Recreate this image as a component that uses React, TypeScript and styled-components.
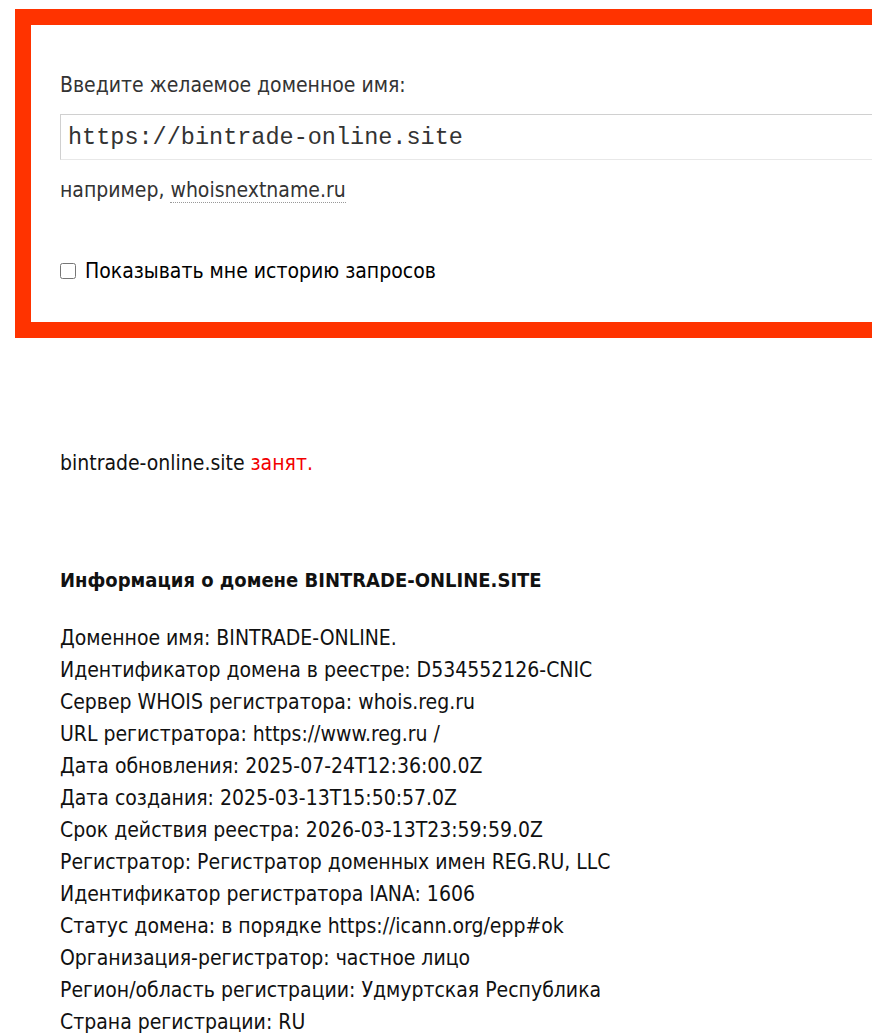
import React from "react";
import styled, { createGlobalStyle } from "styled-components";

const Global = createGlobalStyle`
  html, body { margin: 0; padding: 0; background: #fff; overflow-x: hidden; }
  body { font-family: "DejaVu Sans Condensed", "DejaVu Sans", Tahoma, sans-serif; color: #111; }
`;

const Page = styled.div`
  padding: 9px 0 0 15px;
`;

const SearchBox = styled.form`
  width: 900px;
  border: 16px solid #ff3300;
  box-sizing: border-box;
  padding: 48px 0 39px 29px;
  display: flex;
  flex-direction: column;
`;

const Label = styled.label`
  font-size: 21px;
  color: #333;
  line-height: 24px;
`;

const DomainInput = styled.input`
  margin-top: 17px;
  height: 46px;
  box-sizing: border-box;
  width: 900px;
  border: 1px solid #d0d0d0;
  border-bottom-color: #e8e8e8;
  padding: 0 7px;
  font-family: "Liberation Mono", "Courier New", monospace;
  font-size: 23.5px;
  color: #333;
  outline: none;
`;

const Hint = styled.div`
  margin-top: 18px;
  font-size: 21px;
  line-height: 24px;
  color: #333;
`;

const ExampleLink = styled.a`
  color: #333;
  text-decoration: none;
  border-bottom: 1px dotted #999;
`;

const CheckRow = styled.label`
  margin-top: 57px;
  display: flex;
  align-items: center;
  gap: 9px;
  font-size: 21px;
  line-height: 24px;
  color: #000;
`;

const Check = styled.input`
  margin: 0;
  width: 16px;
  height: 16px;
`;

const Result = styled.section`
  padding: 113px 0 0 45px;
  font-size: 21px;
  color: #111;
`;

const Status = styled.p`
  margin: 0;
  line-height: 24px;
`;

const Busy = styled.span`
  color: #f20000;
`;

const InfoTitle = styled.h3`
  margin: 93px 0 0;
  font-size: 20px;
  font-weight: bold;
  line-height: 24px;
`;

const InfoList = styled.div`
  margin-top: 30px;
  display: flex;
  flex-direction: column;
`;

const InfoLine = styled.div`
  line-height: 32px;
`;

const info = [
  "Доменное имя: BINTRADE-ONLINE.",
  "Идентификатор домена в реестре: D534552126-CNIC",
  "Сервер WHOIS регистратора: whois.reg.ru",
  "URL регистратора: https://www.reg.ru /",
  "Дата обновления: 2025-07-24T12:36:00.0Z",
  "Дата создания: 2025-03-13T15:50:57.0Z",
  "Срок действия реестра: 2026-03-13T23:59:59.0Z",
  "Регистратор: Регистратор доменных имен REG.RU, LLC",
  "Идентификатор регистратора IANA: 1606",
  "Статус домена: в порядке https://icann.org/epp#ok",
  "Организация-регистратор: частное лицо",
  "Регион/область регистрации: Удмуртская Республика",
  "Страна регистрации: RU",
];

export default function App() {
  return (
    <>
      <Global />
      <Page>
        <SearchBox onSubmit={(e) => e.preventDefault()}>
          <Label htmlFor="dn">Введите желаемое доменное имя:</Label>
          <DomainInput id="dn" defaultValue="https://bintrade-online.site" />
          <Hint>
            например, <ExampleLink href="#">whoisnextname.ru</ExampleLink>
          </Hint>
          <CheckRow>
            <Check type="checkbox" />
            Показывать мне историю запросов
          </CheckRow>
        </SearchBox>
        <Result>
          <Status>
            bintrade-online.site <Busy>занят.</Busy>
          </Status>
          <InfoTitle>Информация о домене BINTRADE-ONLINE.SITE</InfoTitle>
          <InfoList>
            {info.map((t) => (
              <InfoLine key={t}>{t}</InfoLine>
            ))}
          </InfoList>
        </Result>
      </Page>
    </>
  );
}
